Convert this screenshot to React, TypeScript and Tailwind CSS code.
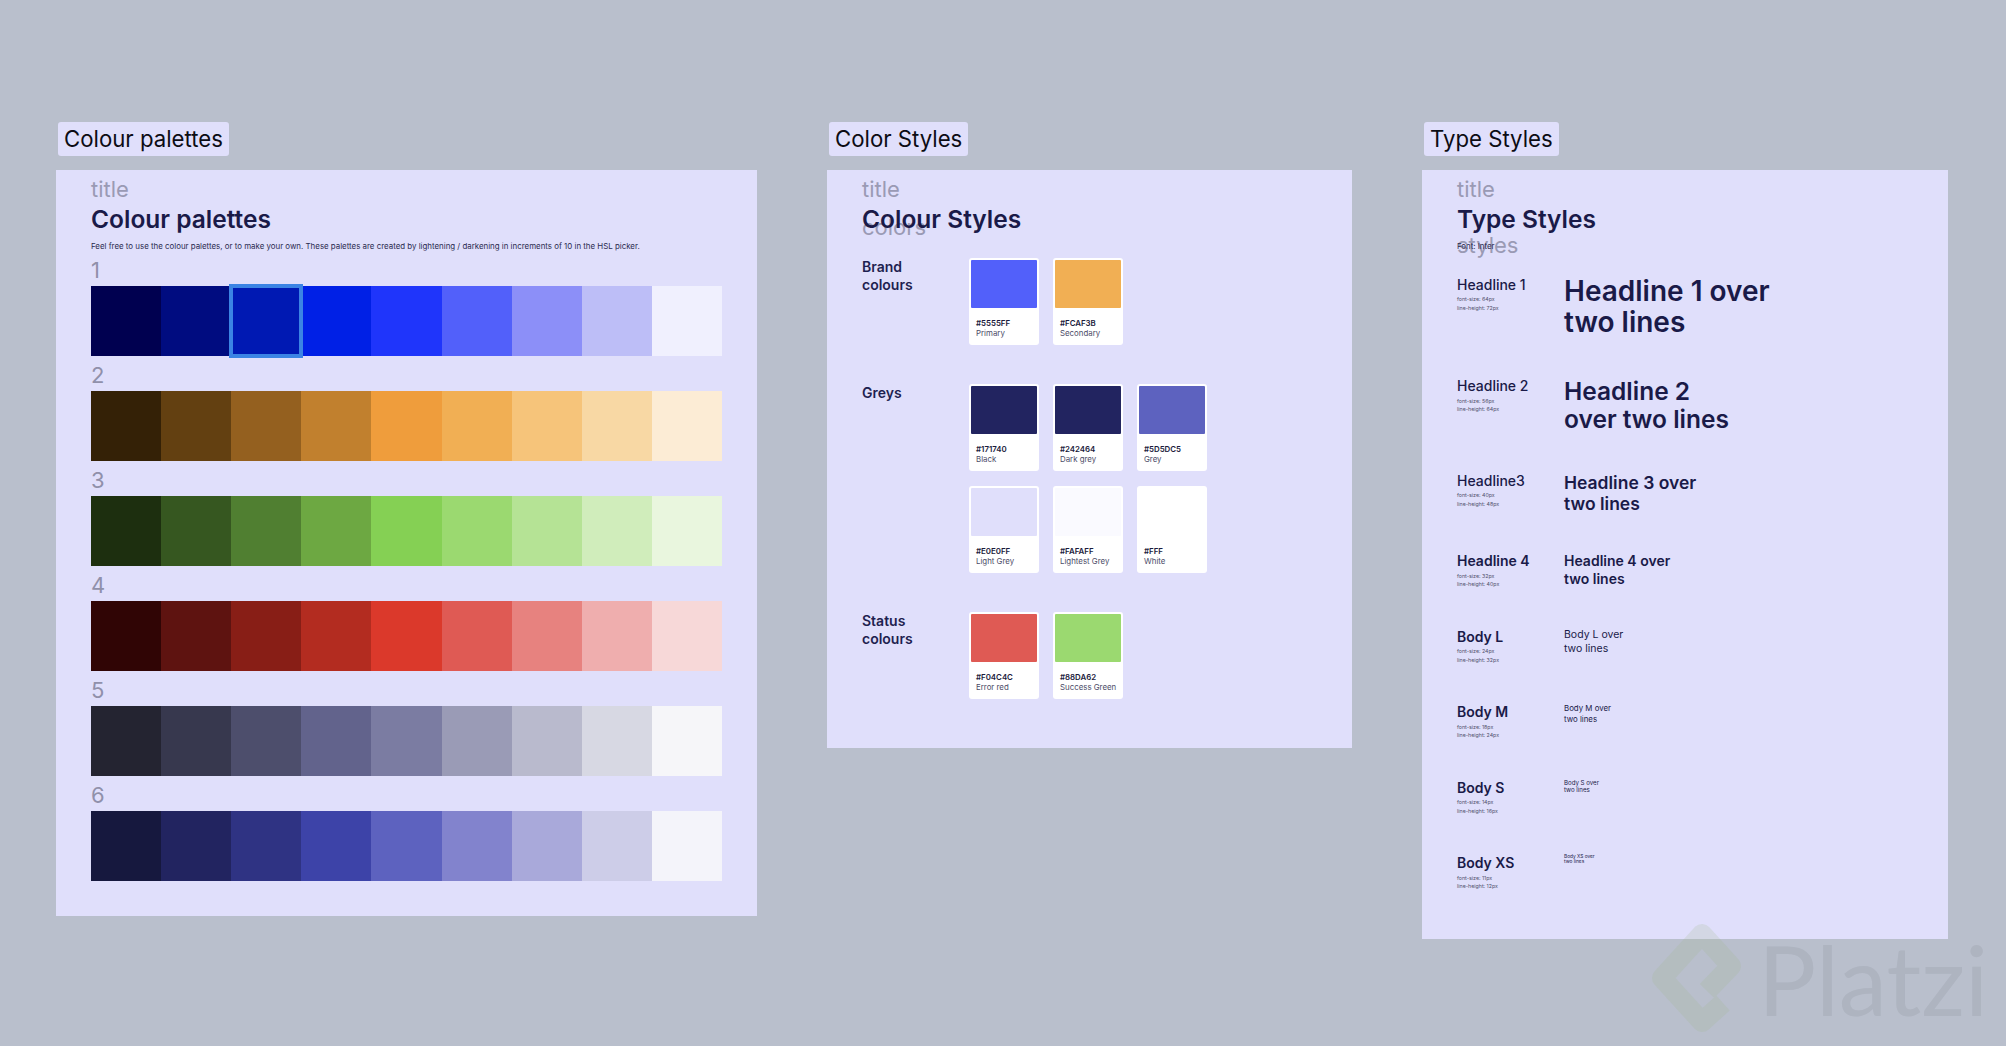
import React from "react";

const palettes: string[][] = [
  ["#000050", "#000c80", "#0019b3", "#0020e6", "#1f35fb", "#5260fa", "#8c8ff8", "#bdbef7", "#f0f0fe"],
  ["#342106", "#634011", "#94601f", "#c1802e", "#ef9d3c", "#f1af54", "#f6c47a", "#f8d8a4", "#fcecd5"],
  ["#1d2f0f", "#365720", "#507f31", "#6da842", "#85d054", "#9bd970", "#b5e395", "#d0edbb", "#e9f6de"],
  ["#300505", "#5e1310", "#881e16", "#b32c20", "#db392b", "#df5a54", "#e7827f", "#efaeae", "#f7d8d8"],
  ["#242431", "#37384e", "#4d4e6c", "#62638c", "#7b7ca2", "#9a9bb6", "#b9bacd", "#d7d8e3", "#f6f6f9"],
  ["#16183e", "#222460", "#2f3383", "#3d43a8", "#5d62bf", "#8283cd", "#a9a9da", "#cdcde8", "#f4f4fa"],
];

type CardT = { c: string; h: string; n: string };

const sections: { label: string[]; rows: CardT[][] }[] = [
  {
    label: ["Brand", "colours"],
    rows: [[{ c: "#5260fa", h: "#5555FF", n: "Primary" }, { c: "#f1af54", h: "#FCAF3B", n: "Secondary" }]],
  },
  {
    label: ["Greys"],
    rows: [
      [
        { c: "#222460", h: "#171740", n: "Black" },
        { c: "#222460", h: "#242464", n: "Dark grey" },
        { c: "#5d62bf", h: "#5D5DC5", n: "Grey" },
      ],
      [
        { c: "#e0dffb", h: "#E0E0FF", n: "Light Grey" },
        { c: "#fafaff", h: "#FAFAFF", n: "Lightest Grey" },
        { c: "#ffffff", h: "#FFF", n: "White" },
      ],
    ],
  },
  {
    label: ["Status", "colours"],
    rows: [[{ c: "#df5a54", h: "#F04C4C", n: "Error red" }, { c: "#9bd970", h: "#88DA62", n: "Success Green" }]],
  },
];

const types = [
  { name: "Headline 1", w: "font-medium", size: "64px", lh: "72px", cls: "text-[28px] leading-[31.5px] font-semibold", a: "Headline 1 over", b: "two lines" },
  { name: "Headline 2", w: "font-medium", size: "56px", lh: "64px", cls: "text-[24.5px] leading-[28px] font-semibold", a: "Headline 2", b: "over two lines" },
  { name: "Headline3", w: "font-medium", size: "40px", lh: "48px", cls: "text-[17.5px] leading-[21px] font-semibold", a: "Headline 3 over", b: "two lines" },
  { name: "Headline 4", w: "font-semibold", size: "32px", lh: "40px", cls: "text-[14px] leading-[17.5px] font-semibold", a: "Headline 4 over", b: "two lines" },
  { name: "Body L", w: "font-semibold", size: "24px", lh: "32px", cls: "text-[10.5px] leading-[14px] font-normal", a: "Body L over", b: "two lines" },
  { name: "Body M", w: "font-semibold", size: "18px", lh: "24px", cls: "text-[7.875px] leading-[10.5px] font-normal", a: "Body M over", b: "two lines" },
  { name: "Body S", w: "font-semibold", size: "14px", lh: "16px", cls: "text-[6.125px] leading-[7px] font-normal", a: "Body S over", b: "two lines" },
  { name: "Body XS", w: "font-semibold", size: "11px", lh: "12px", cls: "text-[4.8px] leading-[5.25px] font-normal", a: "Body XS over", b: "two lines" },
];

function Ghost({ children }: { children: React.ReactNode }) {
  return <div className="text-[22px] leading-[28px] text-[#9a9ab4]">{children}</div>;
}

function Frame({ label, width, children }: { label: string; width: string; children: React.ReactNode }) {
  return (
    <div className={`flex flex-col items-start ${width}`}>
      <div className="ml-[2px] mb-[14px] h-[34px] rounded-[3px] bg-[#e0dffb] px-[6px] text-[22.2px] leading-[34px] text-[#0c0c14]">
        {label}
      </div>
      <div className="w-full bg-[#e0dffb] pl-[35px] pt-[5px]">{children}</div>
    </div>
  );
}

function Card({ c, h, n }: CardT) {
  return (
    <div className="h-[87px] w-[70px] rounded-[3px] bg-white p-[2px]">
      <div className="h-[48px] rounded-[1px]" style={{ backgroundColor: c }} />
      <div className="mt-[9.5px] pl-[5px] text-[7.875px] leading-[10.5px]">
        <div className="font-semibold text-[#1b1b3c]">{h}</div>
        <div className="whitespace-nowrap text-[#4c4c68]">{n}</div>
      </div>
    </div>
  );
}

export default function App() {
  return (
    <div className="relative flex h-[1046px] w-full items-start gap-[70px] overflow-hidden bg-[#b9bfcc] pl-[56px] pt-[122px] font-['Inter',sans-serif]">
      <Frame label="Colour palettes" width="w-[701px]">
        <Ghost>title</Ghost>
        <div className="text-[24.5px] leading-[32px] font-semibold text-[#1a1a48]">Colour palettes</div>
        <p className="mt-[4.5px] text-[7.9px] leading-[12px] text-[#2b2b50]">
          Feel free to use the colour palettes, or to make your own. These palettes are created by lightening / darkening in increments of 10 in the HSL picker.
        </p>
        <div className="mt-[4px] flex w-[631px] flex-col gap-[4.5px] pb-[35px]">
          {palettes.map((row, i) => (
            <div key={i}>
              <div className="mb-[2.5px] text-[22px] leading-[28px] text-[#9090aa]">{i + 1}</div>
              <div className="flex">
                {row.map((c, j) => (
                  <div
                    key={j}
                    className={i === 0 && j === 2 ? "h-[70px] flex-1 outline-4 -outline-offset-2 outline-[#3b84e4]" : "h-[70px] flex-1"}
                    style={{ backgroundColor: c, zIndex: i === 0 && j === 2 ? 1 : undefined }}
                  />
                ))}
              </div>
            </div>
          ))}
        </div>
      </Frame>

      <Frame label="Color Styles" width="w-[525px]">
        <Ghost>title</Ghost>
        <div className="relative h-[32px]">
          <div className="absolute left-0 top-[10px]">
            <Ghost>colors</Ghost>
          </div>
          <div className="relative text-[24.5px] leading-[32px] font-semibold text-[#1a1a48]">Colour Styles</div>
        </div>
        <div className="mt-[23px] flex flex-col gap-[39px] pb-[49px]">
          {sections.map((s) => (
            <div key={s.label[0]} className="flex">
              <div className="w-[107px] text-[14px] leading-[17.5px] font-semibold text-[#1f1f50]">
                {s.label.map((l) => (
                  <div key={l}>{l}</div>
                ))}
              </div>
              <div className="flex flex-col gap-[15px]">
                {s.rows.map((r, i) => (
                  <div key={i} className="flex gap-[14px]">
                    {r.map((card) => (
                      <Card key={card.h} {...card} />
                    ))}
                  </div>
                ))}
              </div>
            </div>
          ))}
        </div>
      </Frame>

      <Frame label="Type Styles" width="w-[526px]">
        <Ghost>title</Ghost>
        <div className="text-[24.5px] leading-[32px] font-semibold text-[#1a1a48]">Type Styles</div>
        <div className="relative mt-[4.5px] h-[12px] text-[7.875px] leading-[12px] text-[#2b2b50]">
          <div className="absolute left-0 top-[-9px]">
            <Ghost>styles</Ghost>
          </div>
          <span className="relative">Font: Inter</span>
        </div>
        <div className="mt-[24px] flex flex-col gap-[38.5px] pb-[48px]">
          {types.map((t) => (
            <div key={t.name} className="flex text-[#1a1a48]">
              <div className="w-[107px]">
                <div className={`text-[14px] leading-[17.5px] ${t.w}`}>{t.name}</div>
                <div className="mt-[2px] text-[5.25px] leading-[8.75px] text-[#50506c]">
                  <div>font-size: {t.size}</div>
                  <div>line-height: {t.lh}</div>
                </div>
              </div>
              <div className={t.cls}>
                <div>{t.a}</div>
                <div>{t.b}</div>
              </div>
            </div>
          ))}
        </div>
      </Frame>

      <div className="pointer-events-none absolute left-[1650px] top-[921px] flex items-center">
        <svg width="98" height="116" viewBox="0 0 98 116" fill="none">
          <path
            d="M57 70 L81 45 L52 13 L12 57 L52 101 L73 82"
            stroke="#9fb78c"
            strokeOpacity="0.2"
            strokeWidth="20"
            strokeLinejoin="round"
          />
        </svg>
        <span className="ml-[10px] font-['Lato',sans-serif] text-[97px] leading-[116px] text-[#adb3bf] opacity-90">Platzi</span>
      </div>
    </div>
  );
}
